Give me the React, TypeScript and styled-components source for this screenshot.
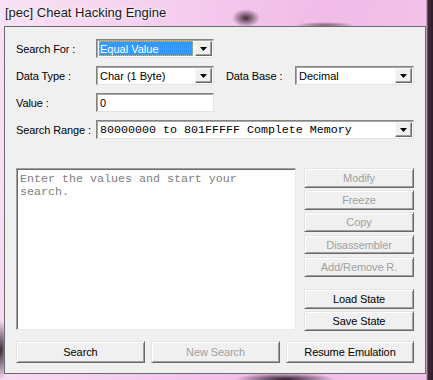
import React from "react";
import styled, { createGlobalStyle } from "styled-components";

const Global = createGlobalStyle`
  html, body { margin: 0; padding: 0; }
  body {
    width: 433px;
    height: 380px;
    overflow: hidden;
    font-family: "Liberation Sans", Arial, sans-serif;
    background:
      radial-gradient(ellipse 14px 9px at 246px 18px, rgba(55,35,45,0.95), rgba(55,35,45,0) 100%),
      radial-gradient(ellipse 30px 3px at 325px 25px, rgba(80,60,70,0.7), rgba(80,60,70,0) 100%),
      radial-gradient(ellipse 8px 30px at 1px 350px, rgba(40,25,35,0.9), rgba(40,25,35,0) 100%),
      radial-gradient(ellipse 50px 6px at 285px 379px, rgba(40,25,35,0.95), rgba(40,25,35,0) 100%),
      linear-gradient(90deg, rgba(0,0,0,0) 426px, #3b2a36 428px, #2c1f29 433px),
      linear-gradient(100deg, #f8e2f4 0%, #f5cdee 35%, #f1bbe8 65%, #f2c4ea 100%);
  }
`;

const Page = styled.div`
  width: 433px;
  height: 380px;
  display: flex;
  flex-direction: column;
`;

const TitleBar = styled.div`
  height: 26px;
  display: flex;
  align-items: center;
  padding-left: 5px;
  padding-bottom: 2px;
  box-sizing: border-box;
  font-size: 13px;
  color: #1a1a1a;
  text-shadow: 0 0 6px rgba(255,255,255,0.9), 0 0 3px rgba(255,255,255,0.9);
`;

const Window = styled.div`
  margin-left: 4px;
  width: 422px;
  height: 348px;
  box-sizing: border-box;
  border: 1px solid #6a6a6a;
  background: #f0f0f0;
  padding: 12px 10px 10px 11px;
  display: flex;
  flex-direction: column;
  font-size: 11px;
  color: #000;
`;

const Form = styled.div`
  display: grid;
  grid-template-columns: 80px 118px 12px 69px 119px;
  grid-auto-rows: 19px;
  row-gap: 8px;
`;

const Label = styled.div<{ $col?: number }>`
  grid-column: ${(p) => p.$col ?? 1};
  display: flex;
  align-items: center;
  white-space: nowrap;
  letter-spacing: -0.1px;
`;

const Field = styled.div<{ $col: string; $mono?: boolean }>`
  grid-column: ${(p) => p.$col};
  box-sizing: border-box;
  display: flex;
  align-items: stretch;
  background: #fff;
  border: 1px solid;
  border-color: #828282 #e3e3e3 #e3e3e3 #828282;
  box-shadow: inset 1px 1px 0 #a8a8a8;
  padding: 1px 1px 1px 2px;
  font-family: ${(p) =>
    p.$mono ? `"Liberation Mono", "Courier New", monospace` : `"Liberation Sans", Arial, sans-serif`};
  font-size: ${(p) => (p.$mono ? "11.67px" : "11px")};
`;

const FieldText = styled.div<{ $selected?: boolean }>`
  flex: 1;
  display: flex;
  align-items: center;
  padding-left: 1px;
  margin-right: 2px;
  white-space: nowrap;
  overflow: hidden;
  background: ${(p) => (p.$selected ? "#3399ff" : "transparent")};
  color: ${(p) => (p.$selected ? "#fff" : "#000")};
  outline: ${(p) => (p.$selected ? "1px dotted #c8c080" : "none")};
  outline-offset: -1px;
`;

const DropButton = styled.div`
  width: 17px;
  box-sizing: border-box;
  background: #f0f0f0;
  border: 1px solid;
  border-color: #f8f8f8 #6a6a6a #6a6a6a #f8f8f8;
  box-shadow: inset -1px -1px 0 #a0a0a0;
  display: flex;
  align-items: center;
  justify-content: center;
`;

const Main = styled.div`
  margin-top: 29px;
  display: flex;
  gap: 8px;
  height: 163px;
`;

const Output = styled.div`
  width: 280px;
  height: 162px;
  box-sizing: border-box;
  background: #fff;
  border: 1px solid;
  border-color: #a0a0a0 #e8e8e8 #e8e8e8 #a0a0a0;
  box-shadow: inset 1px 1px 0 #696969;
  padding: 4px 3px;
  font-family: "Liberation Mono", "Courier New", monospace;
  font-size: 11.67px;
  line-height: 13px;
  color: #808080;
  white-space: pre;
`;

const SideButtons = styled.div`
  width: 110px;
  display: flex;
  flex-direction: column;
  gap: 2.5px;
`;

const Spacer = styled.div`
  height: 7.5px;
`;

const Button = styled.button<{ $h?: number }>`
  height: ${(p) => p.$h ?? 20}px;
  box-sizing: border-box;
  margin: 0;
  padding: 0;
  background: #f0f0f0;
  border: 1px solid;
  border-color: #e3e3e3 #696969 #696969 #e3e3e3;
  box-shadow: inset 1px 1px 0 #ffffff, inset -1px -1px 0 #a0a0a0;
  font-family: "Liberation Sans", Arial, sans-serif;
  font-size: 11px;
  color: #000;
  letter-spacing: -0.1px;
  &:disabled {
    color: #a0a0a0;
  }
`;

const BottomRow = styled.div`
  margin-top: 10px;
  display: grid;
  grid-template-columns: 129px 129px 128px;
  column-gap: 6px;
`;

const Arrow = () => (
  <svg width="7" height="4" viewBox="0 0 7 4">
    <path d="M0 0 H7 L3.5 4 Z" fill="#000" />
  </svg>
);

const Combo = ({
  col,
  text,
  selected,
  mono,
}: {
  col: string;
  text: string;
  selected?: boolean;
  mono?: boolean;
}) => (
  <Field $col={col} $mono={mono}>
    <FieldText $selected={selected}>{text}</FieldText>
    <DropButton>
      <Arrow />
    </DropButton>
  </Field>
);

export default function App() {
  return (
    <>
      <Global />
      <Page>
        <TitleBar>[pec] Cheat Hacking Engine</TitleBar>
        <Window>
          <Form>
            <Label>Search For :</Label>
            <Combo col="2" text="Equal Value" selected />
            <Label>Data Type :</Label>
            <Combo col="2" text="Char (1 Byte)" />
            <Label $col={4}>Data Base :</Label>
            <Combo col="5" text="Decimal" />
            <Label>Value :</Label>
            <Field $col="2">
              <FieldText>0</FieldText>
            </Field>
            <Label>Search Range :</Label>
            <Combo col="2 / 6" text="80000000 to 801FFFFF Complete Memory" mono />
          </Form>
          <Main>
            <Output>{"Enter the values and start your\nsearch."}</Output>
            <SideButtons>
              <Button disabled>Modify</Button>
              <Button disabled>Freeze</Button>
              <Button disabled>Copy</Button>
              <Button disabled>Disassembler</Button>
              <Button disabled>Add/Remove R.</Button>
              <Spacer />
              <Button>Load State</Button>
              <Button>Save State</Button>
            </SideButtons>
          </Main>
          <BottomRow>
            <Button $h={22}>Search</Button>
            <Button $h={22} disabled>
              New Search
            </Button>
            <Button $h={22}>Resume Emulation</Button>
          </BottomRow>
        </Window>
      </Page>
    </>
  );
}
